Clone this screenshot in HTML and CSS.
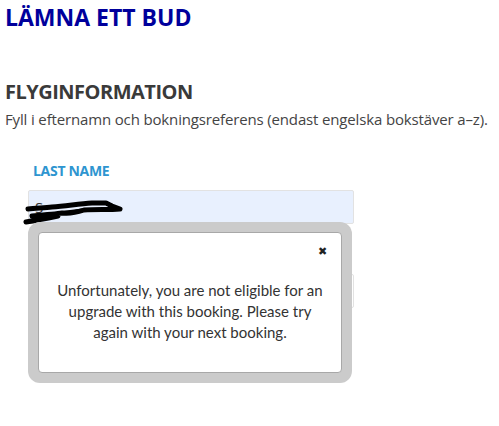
FILE: index.html
```html
<!DOCTYPE html>
<html lang="sv">
<head>
    <meta charset="UTF-8">
    <meta name="viewport" content="width=device-width, initial-scale=1.0">
    <title>Lämna ett bud</title>
    <link rel="stylesheet" href="styles.css">
</head>
<body>
    <div class="page">
        <h1 class="title">LÄMNA ETT BUD</h1>
        <h2 class="section">FLYGINFORMATION</h2>
        <p class="hint">Fyll i efternamn och bokningsreferens (endast engelska bokstäver a–z).</p>
        <form class="form">
            <label class="field">
                <span class="label">LAST NAME</span>
                <input type="text" class="input input-filled" value="S">
            </label>
            <label class="field">
                <input type="text" class="input">
            </label>
        </form>
    </div>

    <svg class="scribble" width="104" height="26" viewBox="0 0 104 26">
        <path d="M6 10 C14 9 22 9 30 8 C44 7 56 5 70 4 L84 4 L90 7 L98 10 C86 11 74 10 62 11 C56 13 48 15 40 14 C34 15 22 16 10 17 C20 16 28 16 36 17 C26 19 16 21 4 23"
              fill="none" stroke="#000" stroke-width="5" stroke-linecap="round" stroke-linejoin="round"/>
        <path d="M40 12 L64 9 L60 14 Z" fill="#000"/>
    </svg>

    <div class="modal">
        <div class="modal-box">
            <button class="close" type="button">&#x2716;</button>
            <p class="message">Unfortunately, you are not eligible for an upgrade with this booking. Please try again with your next booking.</p>
        </div>
    </div>
</body>
</html>
```

FILE: styles.css
```css
* {
    box-sizing: border-box;
    margin: 0;
    padding: 0;
}
body {
    font-family: 'Open Sans', sans-serif;
    background: #fff;
    width: 499px;
    height: 426px;
    overflow: hidden;
    position: relative;
}
.page {
    padding: 2px 5px;
}
.title {
    font-size: 23px;
    font-weight: 700;
    color: #00009c;
    letter-spacing: 0;
    line-height: 30px;
}
.section {
    margin-top: 46px;
    font-size: 20px;
    font-weight: 700;
    color: #3a3a3a;
    letter-spacing: -0.5px;
    line-height: 28px;
}
.hint {
    margin-top: 2px;
    font-size: 15px;
    color: #444;
    line-height: 22px;
    letter-spacing: -0.15px;
}
.form {
    padding: 32px 0 0 23px;
    width: 370px;
    display: flex;
    flex-direction: column;
    gap: 50px;
}
.field {
    display: flex;
    flex-direction: column;
}
.label {
    font-size: 14px;
    font-weight: 700;
    color: #2e95d0;
    padding-left: 5px;
    line-height: 18px;
    margin-bottom: 10px;
    letter-spacing: -0.3px;
}
.input {
    width: 326px;
    height: 34px;
    border: 1px solid #e2e2e2;
    border-radius: 2px;
    background: #fff;
    font-family: 'Open Sans', sans-serif;
    font-size: 15px;
    color: #333;
    padding: 0 6px;
}
.input-filled {
    background: #e8f0fe;
}
.scribble {
    position: absolute;
    left: 22px;
    top: 199px;
}
.modal {
    position: absolute;
    left: 28px;
    top: 222px;
    width: 324px;
    height: 161px;
    background: #cbcbcb;
    border-radius: 12px;
    padding: 10px;
}
.modal-box {
    height: 100%;
    background: #fff;
    border: 1px solid #a8a8a8;
    border-radius: 4px;
    position: relative;
    padding: 47px 16px 0;
}
.close {
    position: absolute;
    right: 14px;
    top: 12px;
    border: none;
    background: none;
    font-size: 11px;
    color: #222;
    cursor: pointer;
}
.message {
    font-family: 'Lato', sans-serif;
    font-size: 15px;
    line-height: 21px;
    color: #333;
    text-align: center;
}
```
